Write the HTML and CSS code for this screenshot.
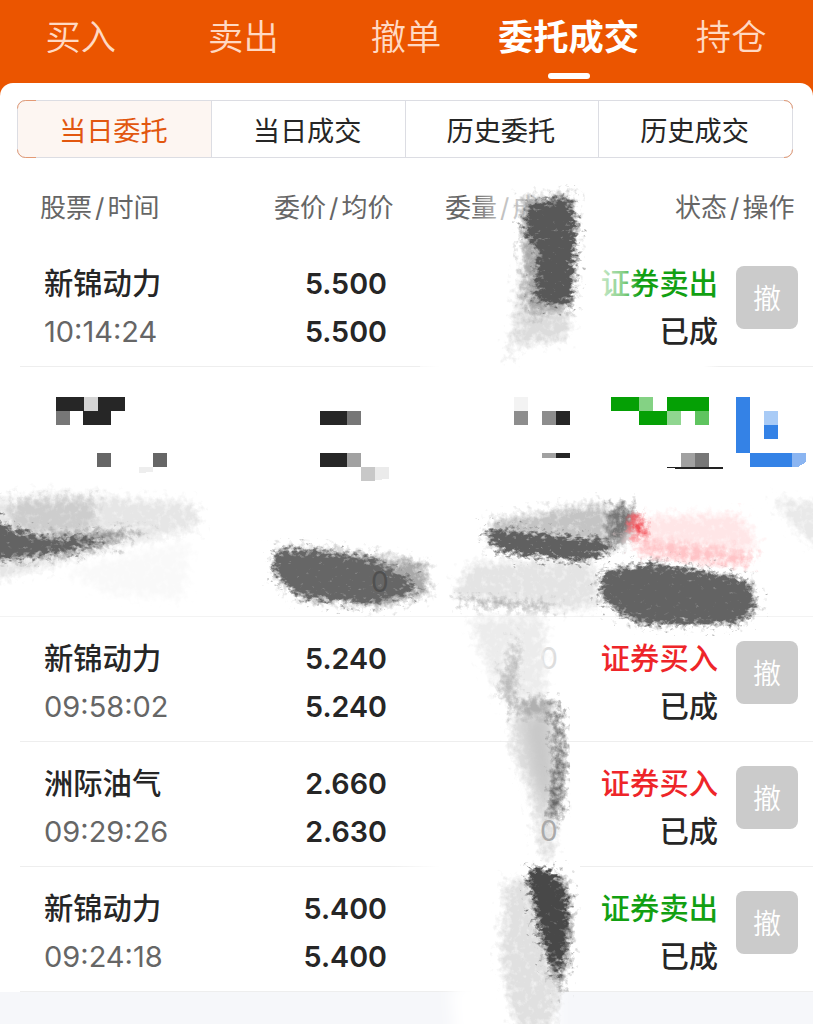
FILE: index.html
```html
<!DOCTYPE html>
<html lang="zh-CN">

<head>
  <meta charset="utf-8">
  <meta name="viewport" content="width=device-width, initial-scale=1.0">
  <title>委托成交</title>
  <link rel="stylesheet" href="styles.css">
</head>

<body>
  <nav class="top-nav">
    <a class="nav-item">买入</a>
    <a class="nav-item">卖出</a>
    <a class="nav-item">撤单</a>
    <a class="nav-item active">委托成交</a>
    <a class="nav-item">持仓</a>
  </nav>

  <main class="panel">
    <div class="segment">
      <button class="segment-item active">当日委托</button>
      <button class="segment-item">当日成交</button>
      <button class="segment-item">历史委托</button>
      <button class="segment-item">历史成交</button>
    </div>

    <div class="list-head">
      <span>股票<i>/</i>时间</span>
      <span>委价<i>/</i>均价</span>
      <span>委量<i>/</i>成</span>
      <span>状态<i>/</i>操作</span>
    </div>

    <div class="order">
      <div class="stock"><b>新锦动力</b><span>10:14:24</span></div>
      <div class="price"><b>5.500</b><b>5.500</b></div>
      <div class="amount"></div>
      <div class="status"><b class="sell">证券卖出</b><b>已成</b></div>
      <button class="cancel">撤</button>
    </div>

    <!-- 打码的委托 -->
    <div class="order-masked">
      <svg class="mosaic" viewBox="0 0 813 124" shape-rendering="crispEdges">
        <g fill="#262626">
          <path d="M56 30h28v14h-28zM98 30h27v14h-14v14h-28v-14h15z" />
          <path d="M320 44h27v14h-27zM320 86h27v14h-27zM556 44h14v14h-14zM556 86h14v5h-14z" />
        </g>
        <path d="M84 30h14v14h-14z" fill="#d4d4d4" />
        <path d="M56 44h14v14h-14zM347 44h14v14h-14zM695 86h14v14h-14z" fill="#777" />
        <path d="M97 86h14v14h-14zM153 86h14v14h-14z" fill="#666" />
        <path d="M139 100h14v5l-14 1z" fill="#eee" />
        <path d="M347 86h14v14h-14zM681 86h14v14h-14zM542 86h14v5h-14z" fill="#a1a1a1" />
        <path d="M361 100h14v14h-14z" fill="#c8c8c8" />
        <path d="M375 100h14v12l-14 1z" fill="#ebebeb" />
        <path d="M514 30h14v14h-14z" fill="#f3f3f3" />
        <path d="M514 44h14v14h-14zM542 44h14v14h-14z" fill="#8d8d8d" />
        <path d="M667 100h56v2h-40l-16-1z" fill="#222" />
        <path d="M611 30h28v14h-28zM667 30h42v14h-42zM639 44h28v14h-28z" fill="#05a005" />
        <path d="M639 30h14v14h-14z" fill="#84d284" />
        <path d="M667 44h14v14h-14z" fill="#90d690" />
        <path d="M695 44h14v14h-14z" fill="#5fc45f" />
        <path d="M736 30h14v56h-14zM764 58h14v14h-14zM750 86h42v14h-42z" fill="#3482e6" />
        <path d="M764 44h14v14h-14z" fill="#a9cbf6" />
        <path d="M792 86h14v9l-8 5h-6z" fill="#8bb5f1" />
      </svg>
    </div>
    <div class="order-masked"></div>

    <div class="order">
      <div class="stock"><b>新锦动力</b><span>09:58:02</span></div>
      <div class="price"><b>5.240</b><b>5.240</b></div>
      <div class="amount"><span>0</span></div>
      <div class="status"><b class="buy">证券买入</b><b>已成</b></div>
      <button class="cancel">撤</button>
    </div>

    <div class="order">
      <div class="stock"><b>洲际油气</b><span>09:29:26</span></div>
      <div class="price"><b>2.660</b><b>2.630</b></div>
      <div class="amount"></div>
      <div class="status"><b class="buy">证券买入</b><b>已成</b></div>
      <button class="cancel">撤</button>
    </div>

    <div class="order">
      <div class="stock"><b>新锦动力</b><span>09:24:18</span></div>
      <div class="price"><b>5.400</b><b>5.400</b></div>
      <div class="amount"></div>
      <div class="status"><b class="sell">证券卖出</b><b>已成</b></div>
      <button class="cancel">撤</button>
    </div>
  </main>

  <!-- 涂抹层 -->
  <svg class="smudges" viewBox="0 0 813 1024">
    <defs>
      <filter id="grain" x="-25%" y="-30%" width="150%" height="160%" color-interpolation-filters="sRGB">
        <feMorphology in="SourceGraphic" operator="dilate" radius="12" result="ink" />
        <feGaussianBlur in="SourceAlpha" stdDeviation="6" result="soft" />
        <feTurbulence type="fractalNoise" baseFrequency="0.17 0.24" numOctaves="3" seed="7" />
        <feColorMatrix values="0 0 0 0 0  0 0 0 0 0  0 0 0 0 0  1 0 0 0 0" result="noise" />
        <feComposite in="soft" in2="noise" operator="arithmetic" k2="2.3" k3="3" k4="-2.2" result="edge" />
        <feComposite in="ink" in2="edge" operator="in" />
        <feGaussianBlur stdDeviation="0.7" />
      </filter>
      <filter id="wash" x="-20%" y="-20%" width="140%" height="140%" color-interpolation-filters="sRGB">
        <feMorphology in="SourceGraphic" operator="dilate" radius="10" result="ink" />
        <feGaussianBlur in="SourceAlpha" stdDeviation="6" result="soft" />
        <feTurbulence type="fractalNoise" baseFrequency="0.16" numOctaves="4" seed="3" />
        <feColorMatrix values="0 0 0 0 0  0 0 0 0 0  0 0 0 0 0  1 0 0 0 0" result="noise" />
        <feComposite in="soft" in2="noise" operator="arithmetic" k2="1.3" k3="1.5" k4="-1" result="edge" />
        <feComposite in="ink" in2="edge" operator="in" />
        <feGaussianBlur stdDeviation="0.7" />
      </filter>
      <filter id="soft" x="-30%" y="-30%" width="160%" height="160%">
        <feGaussianBlur stdDeviation="7" />
      </filter>
      <linearGradient id="fadeHead">
        <stop offset="0" stop-color="#fff" stop-opacity="0" />
        <stop offset="0.45" stop-color="#fff" stop-opacity="0.6" />
        <stop offset="1" stop-color="#fff" stop-opacity="0.75" />
      </linearGradient>
      <linearGradient id="fadeSell">
        <stop offset="0" stop-color="#fff" stop-opacity="0.8" />
        <stop offset="0.6" stop-color="#fff" stop-opacity="0.5" />
        <stop offset="1" stop-color="#fff" stop-opacity="0" />
      </linearGradient>
      <linearGradient id="fadeLine">
        <stop offset="0" stop-color="#fff" stop-opacity="0" />
        <stop offset="0.15" stop-color="#fff" />
        <stop offset="0.95" stop-color="#fff" />
        <stop offset="1" stop-color="#fff" stop-opacity="0" />
      </linearGradient>
    </defs>

    <!-- 分段按钮的圆角 -->
    <path class="corners" d="M36 100.500H25.500A8 8 0 0 0 17.500 108.500M17.500 149.500A8 8 0 0 0 25.500 157.500H36M784 100.500A8 8 0 0 1 792.500 108.500M792.500 149.500A8 8 0 0 1 784 157.500" />

    <!-- 擦除的部分 -->
    <path d="M472 192h68v32h-68z" fill="url(#fadeHead)" />
    <path d="M598 266h42v36h-42z" fill="url(#fadeSell)" />
    <path d="M420 364h300v5H420zM390 864h190v5H390z" fill="url(#fadeLine)" />
    <path d="M0 489h813v5H0z" fill="#fff" />
    <path d="M450 990L500 960h58v80H455z" fill="#fff" filter="url(#soft)" />

    <!-- 右上竖条 -->
    <path d="M524 230L546 232L572 320L566 340L520 345L503 366L512 335z" fill="#dcdcdc" filter="url(#wash)" />
    <path d="M521 198L574 194L576 230L571 310L526 315z" fill="#a8a8a8" filter="url(#wash)" />
    <path d="M528 204L570 196L576 225L573 304L535 304L538 246L524 236z" fill="#585858" filter="url(#grain)" />

    <!-- 左侧 -->
    <path d="M-10 500L50 492L195 502L200 528L110 550L-10 583z" fill="#e6e6e6" filter="url(#wash)" />
    <path d="M10 500L96 498L94 535L12 536z" fill="#cdcdcd" filter="url(#wash)" />
    <path d="M60 570L190 540L185 600L110 595z" fill="#f9f9f9" filter="url(#wash)" />
    <path d="M-10 536L60 535L150 528L110 545L60 555L-10 560z" fill="#999" filter="url(#wash)" />
    <path d="M-14 500L4 526L50 539L120 535L75 551L-14 561z" fill="#636363" filter="url(#grain)" />

    <!-- 中间 -->
    <path d="M276 550L330 549L425 562L430 594L382 607L300 599L274 576z" fill="#a9a9a9" filter="url(#wash)" />
    <path d="M274 549L310 550L370 558L408 578L420 592L370 604L300 597L273 574z" fill="#666" filter="url(#grain)" />
    <text class="ghost dark" x="371" y="592">0</text>

    <!-- 右侧 -->
    <path d="M490 520L600 502L624 510L630 546L585 558L486 545z" fill="#c4c4c4" filter="url(#wash)" />
    <path d="M470 562L595 560L600 607L552 612L455 602L455 588z" fill="#e4e4e4" filter="url(#wash)" />
    <path d="M458 596L555 606L553 613L458 603z" fill="#aaa" filter="url(#wash)" />
    <path d="M482 528L520 531L612 541L608 555L580 562L500 553z" fill="#606060" filter="url(#grain)" />
    <path d="M610 508L630 502L640 538L606 545z" fill="#777" filter="url(#wash)" />
    <path d="M638 516L740 513L757 540L752 559L700 557L640 550L620 540z" fill="#ffe6e7" filter="url(#wash)" />
    <path d="M628 515L645 516L647 537L628 537z" fill="#f2535b" filter="url(#wash)" />
    <path d="M632 540L690 545L755 554L751 566L690 562L640 555z" fill="#ffc4c7" filter="url(#wash)" />
    <path d="M604 572L655 565L750 582L757 608L738 622L640 623L602 600z" fill="#999" filter="url(#wash)" />
    <path d="M602 571L655 563L748 579L756 608L738 624L640 624L600 599z" fill="#636363" filter="url(#grain)" />
    <path d="M770 497L830 504V555L800 535z" fill="#e9e9e9" filter="url(#wash)" />

    <!-- 下方竖条 -->
    <path d="M468 617L545 614L546 710L508 710L488 672z" fill="#ececec" filter="url(#wash)" />
    <path d="M514 640L520 632L514 708L498 690z" fill="#bcbcbc" filter="url(#wash)" />
    <path d="M512 704L556 701L562 800L550 868L538 850L530 790L510 750z" fill="#e0e0e0" filter="url(#wash)" />
    <path d="M522 718L550 712L555 780L547 815L532 775z" fill="#c8c8c8" filter="url(#soft)" />
    <path d="M508 700L552 697L558 718L520 717z" fill="#b0b0b0" filter="url(#wash)" />
    <path d="M552 702L562 715L566 768L561 820L548 818L555 765z" fill="#686868" filter="url(#wash)" />
    <text class="ghost" x="540" y="841">0</text>

    <path d="M504 880L545 876L564 980L552 1030L515 1030L500 960z" fill="#e0e0e0" filter="url(#wash)" />
    <path d="M528 874L566 878L572 930L562 995L550 965z" fill="#7d7d7d" filter="url(#wash)" />
    <path d="M526 868L552 868L567 894L567 940L558 985L541 935z" fill="#484848" filter="url(#grain)" />
  </svg>
</body>

</html>
```
FILE: styles.css
```css
body {
  position: relative;
  height: 1024px;
  margin: 0;
  overflow: hidden;
  font-family: Inter, "Noto Sans CJK SC", sans-serif;
  background-color: #f6f7fa;
  color: #262626;
}

button {
  padding: 0;
  border: none;
  background: none;
  font-family: inherit;
  color: inherit;
}

.top-nav {
  display: flex;
  height: 97px;
  background-color: #eb5500;
}

.nav-item {
  display: flex;
  flex: 1;
  flex-direction: column;
  align-items: center;
  height: 83px;
  margin-left: -1px;
  font-size: 35.3px;
  line-height: 76px;
  font-weight: 350;
  color: #ffd9c3;
}

.nav-item.active {
  font-weight: 700;
  color: #fff;
}

.nav-item.active::after {
  content: "";
  width: 42px;
  height: 6px;
  margin-top: -3px;
  border-radius: 3px;
  background-color: #fff;
}

.panel {
  height: 908px;
  margin-top: -14px;
  border-radius: 13px 13px 0 0;
  background-color: #fff;
  padding-top: 1px;
}

.segment {
  display: flex;
  box-sizing: border-box;
  height: 58px;
  margin: 16px 20px 0 17px;
  border: 1px solid #dcdde3;
  border-radius: 8px;
  overflow: hidden;
}

.segment-item {
  flex: 1;
  padding: 0 2px 1px 0;
  font-size: 27.2px;
  font-weight: 400;
  border-left: 1px solid #dcdde3;
}

.segment-item:first-child {
  border-left: none;
}

.segment-item.active {
  background-color: #fdf6f2;
  color: #e2570f;
}

.list-head {
  display: grid;
  grid-template-columns: 234px 171px 230px 120px;
  height: 84px;
  padding-left: 40px;
  font-size: 26px;
  line-height: 99px;
  color: #666;
  white-space: nowrap;
}

.list-head i {
  margin: 0 3px;
  font-style: normal;
}

.order {
  display: grid;
  grid-template-columns: 200px 143px 171px 160px 62px;
  box-sizing: border-box;
  height: 125px;
  margin-left: 20px;
  padding: 18px 0 0 24px;
  border-bottom: 1px solid #eee;
  font-size: 29.3px;
  line-height: 48px;
}

.order b {
  display: block;
  font-weight: 500;
}

.stock span {
  display: block;
  font-size: 29px;
  color: #666;
}

.price,
.amount,
.status {
  text-align: right;
}

.price b {
  font-size: 28.7px;
  font-weight: 600;
}

.amount span {
  color: #ddd;
}

.status .sell {
  color: #12a012;
}

.status .buy {
  color: #ee2529;
}

.cancel {
  height: 63px;
  margin: 6px -18px 0 18px;
  padding-bottom: 2px;
  border-radius: 8px;
  background-color: #cbcbcb;
  font-size: 28px;
  font-weight: 350;
  color: #fff;
}

.order-masked {
  box-sizing: border-box;
  height: 125px;
  border-bottom: 1px solid #f3f3f3;
}

.mosaic {
  display: block;
  width: 813px;
  height: 124px;
}

.smudges {
  position: absolute;
  top: 0;
  left: 0;
  width: 813px;
  height: 1024px;
  pointer-events: none;
}

.corners {
  fill: none;
  stroke: #e39a75;
}

.ghost {
  font-size: 28px;
  fill: #aaa;
}

.ghost.dark {
  fill: #505050;
}
```
